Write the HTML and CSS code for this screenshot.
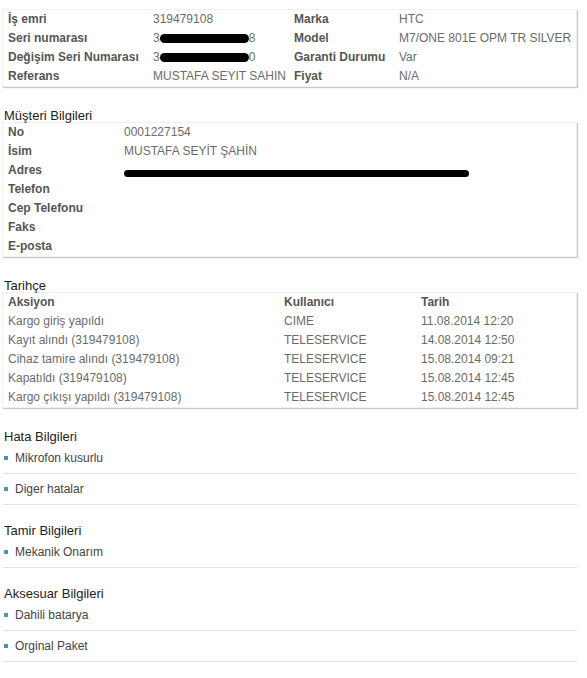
FILE: index.html
```html
<!DOCTYPE html>
<html lang="tr">
<head>
    <meta charset="UTF-8">
    <meta name="viewport" content="width=device-width, initial-scale=1.0">
    <title>İş Emri Detayı</title>
    <link rel="stylesheet" href="styles.css">
</head>
<body>
    <!-- Genel bilgiler -->
    <div class="box">
        <table class="info main-info">
            <tr>
                <th>İş emri</th><td>319479108</td>
                <th>Marka</th><td>HTC</td>
            </tr>
            <tr>
                <th>Seri numarası</th><td>3<span class="redact"></span>8</td>
                <th>Model</th><td>M7/ONE 801E OPM TR SILVER</td>
            </tr>
            <tr>
                <th>Değişim Seri Numarası</th><td>3<span class="redact"></span>0</td>
                <th>Garanti Durumu</th><td>Var</td>
            </tr>
            <tr>
                <th>Referans</th><td>MUSTAFA SEYIT SAHIN</td>
                <th>Fiyat</th><td>N/A</td>
            </tr>
        </table>
    </div>

    <h3 class="section-title">Müşteri Bilgileri</h3>
    <div class="box">
        <table class="info customer-info">
            <tr><th>No</th><td>0001227154</td></tr>
            <tr><th>İsim</th><td>MUSTAFA SEYİT ŞAHİN</td></tr>
            <tr><th>Adres</th><td><span class="redact redact-long"></span></td></tr>
            <tr><th>Telefon</th><td></td></tr>
            <tr><th>Cep Telefonu</th><td></td></tr>
            <tr><th>Faks</th><td></td></tr>
            <tr><th>E-posta</th><td></td></tr>
        </table>
    </div>

    <h3 class="section-title">Tarihçe</h3>
    <div class="box">
        <table class="info history">
            <tr><th>Aksiyon</th><th>Kullanıcı</th><th>Tarih</th></tr>
            <tr><td>Kargo giriş yapıldı</td><td>CIME</td><td>11.08.2014 12:20</td></tr>
            <tr><td>Kayıt alındı (319479108)</td><td>TELESERVICE</td><td>14.08.2014 12:50</td></tr>
            <tr><td>Cihaz tamire alındı (319479108)</td><td>TELESERVICE</td><td>15.08.2014 09:21</td></tr>
            <tr><td>Kapatıldı (319479108)</td><td>TELESERVICE</td><td>15.08.2014 12:45</td></tr>
            <tr><td>Kargo çıkışı yapıldı (319479108)</td><td>TELESERVICE</td><td>15.08.2014 12:45</td></tr>
        </table>
    </div>

    <h3 class="section-title">Hata Bilgileri</h3>
    <ul class="list">
        <li>Mikrofon kusurlu</li>
        <li>Diger hatalar</li>
    </ul>

    <h3 class="section-title">Tamir Bilgileri</h3>
    <ul class="list">
        <li>Mekanik Onarım</li>
    </ul>

    <h3 class="section-title">Aksesuar Bilgileri</h3>
    <ul class="list">
        <li>Dahili batarya</li>
        <li>Orginal Paket</li>
    </ul>
</body>
</html>
```

FILE: styles.css
```css
body {
    font-family: Arial, "Liberation Sans", sans-serif;
    font-size: 12px;
    color: #666;
    margin: 0;
    padding: 9px 10px 0 2px;
    background-color: #fff;
}
.box {
    border: 1px solid #f0f0f0;
    box-shadow: 1px 1px 1px #c8c8c8;
    background-color: #fff;
}
.info {
    width: 100%;
    border-collapse: collapse;
    table-layout: fixed;
}
.info th, .info td {
    height: 19px;
    padding: 0 0 0 5px;
    line-height: 19px;
    text-align: left;
    white-space: nowrap;
    overflow: hidden;
    vertical-align: middle;
}
.info th {
    color: #555;
    font-weight: bold;
}
.info td {
    color: #6b6b6b;
}
.main-info th:nth-child(1) { width: 140px; }
.main-info td:nth-child(2) { width: 136px; }
.main-info th:nth-child(3) { width: 100px; }
.customer-info th { width: 111px; }
.history th:nth-child(1) { width: 271px; }
.history th:nth-child(2) { width: 132px; }
.redact {
    display: inline-block;
    width: 89px;
    height: 9px;
    background-color: #000;
    border-radius: 5px;
    vertical-align: -1px;
}
.redact-long {
    width: 345px;
    height: 7px;
    border-radius: 4px;
    vertical-align: -3px;
}
.section-title {
    margin: 22px 0 0 2px;
    font-size: 13px;
    font-weight: normal;
    color: #222;
    line-height: 13px;
    height: 13px;
}
.list + .section-title {
    margin-top: 19px;
}
.list {
    list-style: none;
    margin: 0 0 0 1px;
    padding: 0;
}
.list li {
    position: relative;
    padding: 7px 0 7px 12px;
    line-height: 16px;
    font-size: 12px;
    color: #444;
    border-bottom: 1px solid #e2e2e2;
}
.list li::before {
    content: "";
    position: absolute;
    left: 1px;
    top: 13px;
    width: 4px;
    height: 4px;
    background-color: #4d93b7;
}
```
